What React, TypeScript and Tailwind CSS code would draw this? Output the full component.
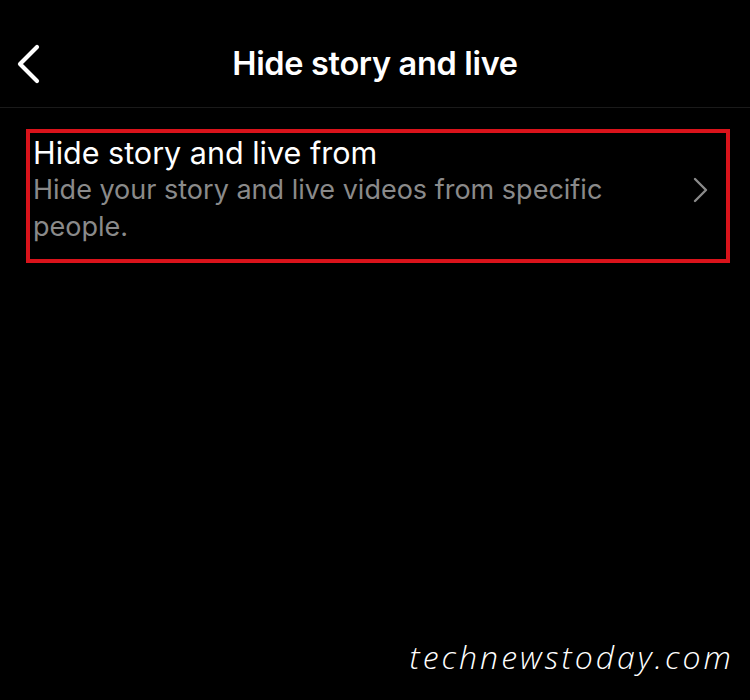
import React from "react";

function BackIcon() {
  return (
    <svg width="28" height="42" viewBox="0 0 28 42" fill="none">
      <path d="M23 4 L6 21 L23 38" stroke="white" strokeWidth="4.2" strokeLinecap="round" strokeLinejoin="round" />
    </svg>
  );
}

function ChevronRight() {
  return (
    <svg width="20" height="28" viewBox="0 0 20 28" fill="none">
      <path d="M5 3 L16 14 L5 25" stroke="#8a8a8a" strokeWidth="2.4" strokeLinecap="round" strokeLinejoin="round" />
    </svg>
  );
}

export default function App() {
  return (
    <div className="flex h-[700px] w-[750px] flex-col bg-black font-['Inter',sans-serif] text-white">
      {/* Header */}
      <div className="relative flex h-[108px] justify-center border-b border-[#1a1a1a] pt-[44px]">
        <button className="absolute left-[14px] top-[43px]">
          <BackIcon />
        </button>
        <h1 className="text-[32.5px] font-semibold leading-[40px] tracking-[-0.01em]">Hide story and live</h1>
      </div>

      {/* Row */}
      <div className="ml-[26px] mr-[20px] mt-[21px] border-4 border-[#d9131b]">
        <div className="flex items-center justify-between pb-[14px] pl-[3px] pr-[16px] pt-[1px]">
          <div className="flex flex-col">
            <span className="text-[30.5px] leading-[37px] text-white">Hide story and live from</span>
            <span className="max-w-[620px] text-[27px] leading-[37px] text-[#8a8a8a]">
              Hide your story and live videos from specific people.
            </span>
          </div>
          <ChevronRight />
        </div>
      </div>

      <div className="flex-1" />

      {/* Watermark */}
      <div className="flex justify-end pb-[21px] pr-[16px]">
        <span className="font-['Open_Sans',sans-serif] text-[32px] font-light italic leading-[44px] tracking-[0.095em] text-white">
          technewstoday.com
        </span>
      </div>
    </div>
  );
}
